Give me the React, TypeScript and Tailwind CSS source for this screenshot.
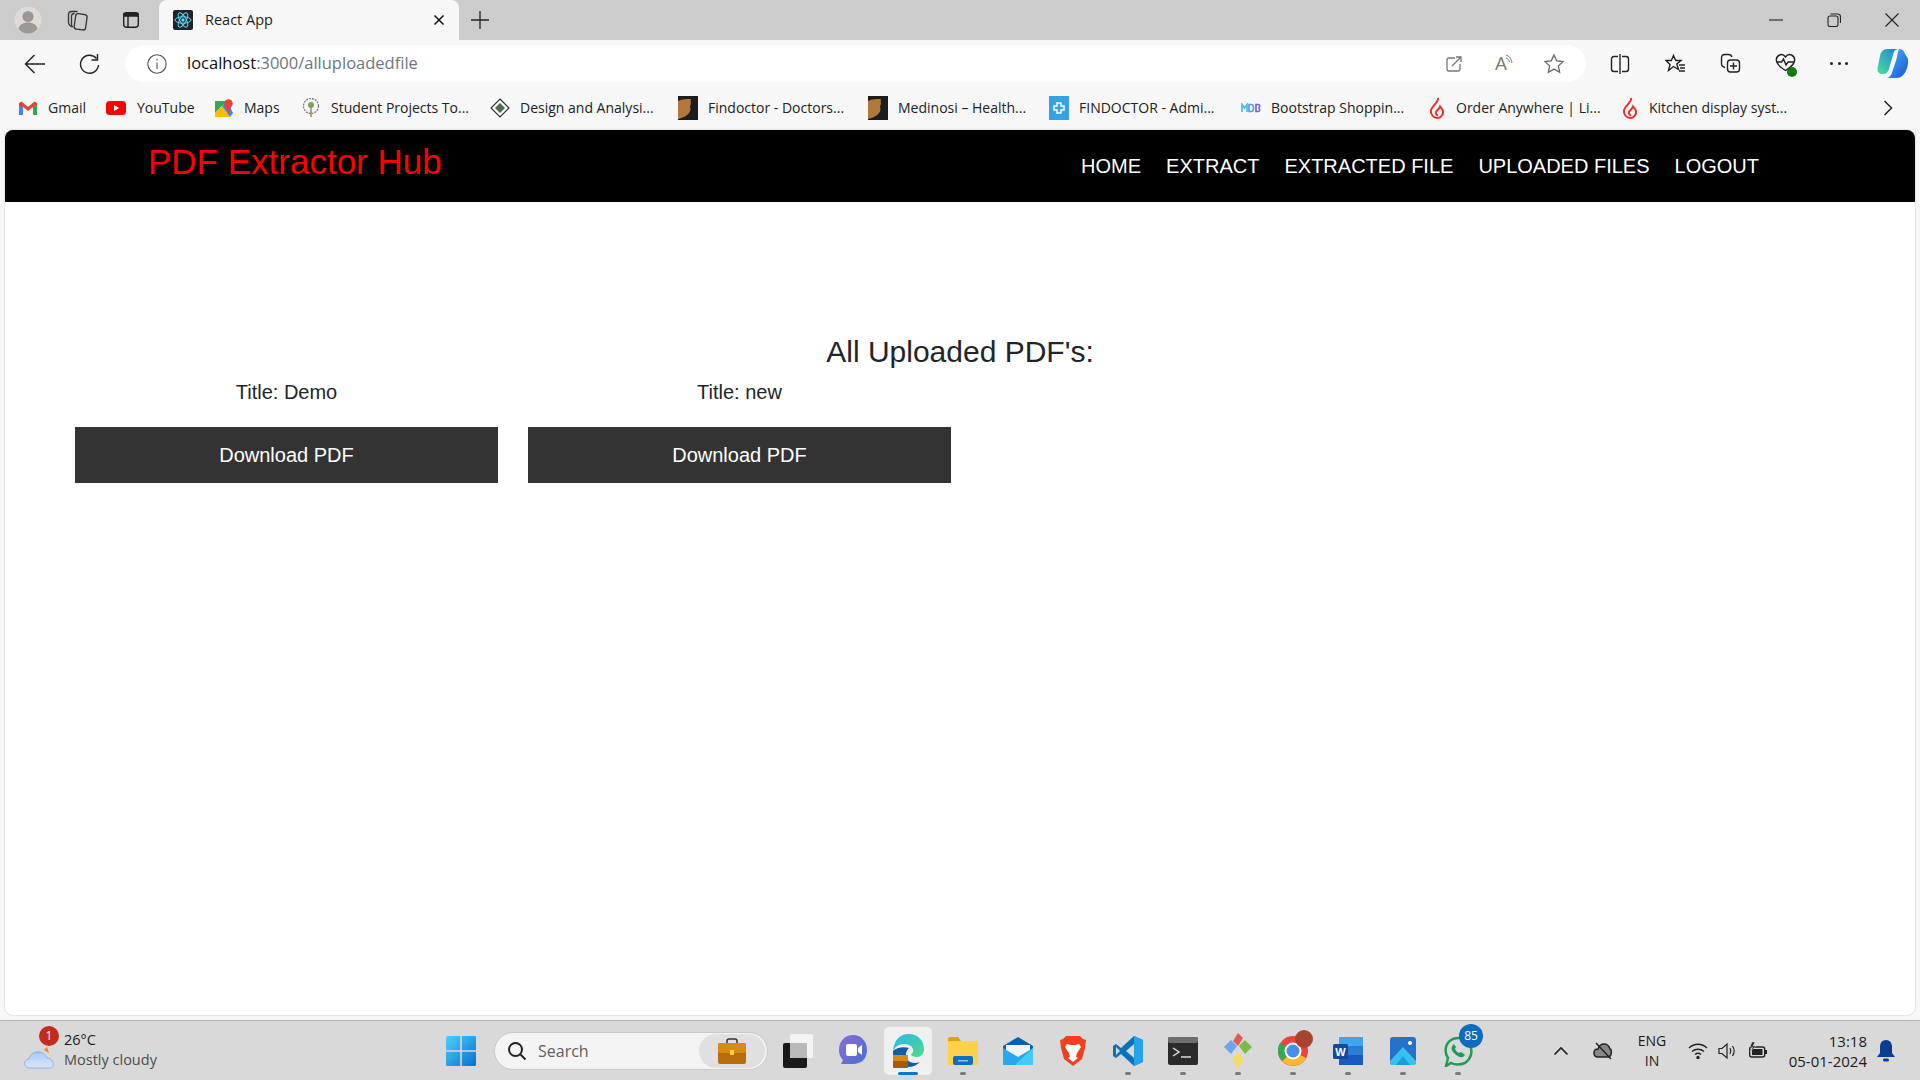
import { ReactNode } from 'react';

const uiFont = "font-['Open_Sans','Noto_Sans',sans-serif]";

function TitleBar() {
  return (
    <div className="flex h-10 items-end bg-[#cccccc]">
      <div className="flex h-10 items-center pl-[14px]">
        <svg width="28" height="28" viewBox="0 0 28 28">
          <circle cx="14" cy="14" r="13.5" fill="#dedbd6" />
          <circle cx="14" cy="10.5" r="5.5" fill="#9c9893" />
          <path d="M4.5 23c1-5 5-6.5 9.5-6.5s8.500 1.500 9.500 6.500c-2.500 3-6 4.500-9.500 4.500s-7-1.500-9.500-4.500z" fill="#9c9893" />
        </svg>
        <svg className="ml-[23px]" width="24" height="24" viewBox="0 0 24 24" fill="none" stroke="#333" strokeWidth="1.3">
          <rect x="10" y="6" width="11.500" height="15.500" rx="2.500" transform="rotate(8 15 13)" fill="#ccc" />
          <path d="M7 19l-2-1.500c-1-1-1.500-1.800-1.500-3V7c0-2 1-3.500 3-3.500h6" />
          <path d="M9.500 5.500c-1.800 0-3 1-3 3v8c0 1 .5 2 1.500 2.500" />
        </svg>
        <svg className="ml-[33px]" width="18" height="18" viewBox="0 0 18 18" fill="none" stroke="#222" strokeWidth="1.4">
          <rect x="1.700" y="1.700" width="14.600" height="14.600" rx="3" />
          <path d="M2 2.500h14V5H2z" fill="#222" />
          <path d="M6 5v11" />
        </svg>
      </div>
      <div className="ml-[19px] flex h-10 w-[300px] items-center rounded-t-lg bg-[#f7f7f7] pb-[1px] pl-[14px] pr-[14px]">
        <svg width="20" height="20" viewBox="0 0 20 20">
          <rect width="20" height="20" rx="2" fill="#20232a" />
          <g fill="none" stroke="#61dafb" strokeWidth="1">
            <ellipse cx="10" cy="10" rx="8" ry="3.200" />
            <ellipse cx="10" cy="10" rx="8" ry="3.200" transform="rotate(60 10 10)" />
            <ellipse cx="10" cy="10" rx="8" ry="3.200" transform="rotate(120 10 10)" />
          </g>
          <circle cx="10" cy="10" r="1.700" fill="#61dafb" />
        </svg>
        <span className={`ml-3 flex-1 text-[14.500px] text-[#222] ${uiFont}`}>React App</span>
        <svg width="12" height="12" viewBox="0 0 12 12" stroke="#111" strokeWidth="1.500">
          <path d="M1.500 1.500l9 9M10.500 1.500l-9 9" />
        </svg>
      </div>
      <div className="flex h-10 flex-1 items-center pl-[12px]">
        <svg width="18" height="18" viewBox="0 0 18 18" stroke="#222" strokeWidth="1.300">
          <path d="M9 0v18M0 9h18" />
        </svg>
      </div>
      <div className="flex h-10 items-center gap-[44px] pr-[21px]">
        <svg width="14" height="14" viewBox="0 0 14 14" stroke="#222" strokeWidth="1.100">
          <path d="M0 7h14" />
        </svg>
        <svg width="14" height="14" viewBox="0 0 14 14" fill="none" stroke="#222" strokeWidth="1.100">
          <rect x="1" y="3" width="10" height="10.500" rx="2" />
          <path d="M3.500 1h7c2 0 3 1 3 3v6" />
        </svg>
        <svg width="14" height="14" viewBox="0 0 14 14" stroke="#222" strokeWidth="1.100">
          <path d="M.5.500l13 13M13.500.500l-13 13" />
        </svg>
      </div>
    </div>
  );
}

function ToolBar() {
  return (
    <div className="flex h-[47px] items-center bg-[#f7f7f7]">
      <div className="flex w-[125px] items-center pl-[24px]">
        <svg width="22" height="22" viewBox="0 0 22 22" fill="none" stroke="#222" strokeWidth="1.500">
          <path d="M21 11H2M10.500 2L1.500 11l9 9" />
        </svg>
        <svg className="ml-[33px]" width="21" height="22" viewBox="0 0 21 22" fill="none" stroke="#222" strokeWidth="1.400">
          <path d="M17.500 5.500A9 9 0 1 0 19.500 12" />
          <path d="M18.500 1v6h-6" />
        </svg>
      </div>
      <div className={`flex h-[37px] w-[1461px] items-center rounded-full bg-white pl-[22px] pr-[22px] ${uiFont}`}>
        <svg width="20" height="20" viewBox="0 0 20 20" fill="none" stroke="#555" strokeWidth="1.100">
          <circle cx="10" cy="10" r="9.200" />
          <path d="M10 8.500v6.500M10 5v1.500" />
        </svg>
        <span className="ml-[20px] flex-1 text-[16.500px] text-[#111]">
          localhost<span className="text-[#6d7682]">:3000/alluploadedfile</span>
        </span>
        <svg width="16" height="16" viewBox="0 0 16 16" fill="none" stroke="#777" strokeWidth="1.300">
          <path d="M9 2H3C1.800 2 1 2.800 1 4v9c0 1.200.8 2 2 2h9c1.200 0 2-.8 2-2V8" />
          <path d="M6 10L15 1M10 1h5v5" />
        </svg>
        <span className="ml-[33px] flex w-[20px] items-start text-[19px] leading-none text-[#777]">
          A
          <svg className="-ml-[2px]" width="9" height="12" viewBox="0 0 9 12" fill="none" stroke="#777" strokeWidth="1">
            <path d="M1 1c3 1 5 3 6 8M1 4c2 .8 3 2 3.500 4" />
          </svg>
        </span>
        <svg className="ml-[29px]" width="20" height="20" viewBox="0 0 20 20" fill="none" stroke="#666" strokeWidth="1.300">
          <path d="M10 1l2.700 5.800 6.300.8-4.600 4.300 1.200 6.300-5.600-3.100-5.600 3.100 1.200-6.300L1 7.600l6.300-.8z" />
        </svg>
      </div>
      <div className="flex flex-1 items-center pl-[24px]">
        <svg width="20" height="20" viewBox="0 0 20 20" fill="none" stroke="#222" strokeWidth="1.400">
          <path d="M8 2.500H4C2.500 2.500 1.500 3.500 1.500 5v10c0 1.500 1 2.500 2.500 2.500h4M12 2.500h4c1.500 0 2.500 1 2.500 2.500v10c0 1.500-1 2.500-2.500 2.500h-4M10 0v20" />
        </svg>
        <svg className="ml-[35px]" width="21" height="20" viewBox="0 0 21 20" fill="none" stroke="#222" strokeWidth="1.400">
          <path d="M8.500 1.500l2.200 5H16l-4.200 3.500 1.700 5.500-5-3-5 4 1.500-6L1 6.500h5.300z" />
          <path d="M14 11h6M15 14h5M14 17h6" />
        </svg>
        <svg className="ml-[34px]" width="21" height="21" viewBox="0 0 21 21" fill="none" stroke="#222" strokeWidth="1.400">
          <path d="M5 14.500c-2-.5-3.500-2-3.500-4V5c0-2 1.500-3.500 3.500-3.500h3.500c2 0 3 1 3.500 2.500" />
          <rect x="7.500" y="7" width="12" height="12" rx="3" fill="#f7f7f7" />
          <path d="M13.500 9.500v7M10 13h7" />
        </svg>
        <span className="relative ml-[34px] flex h-[21px] w-[21px]">
          <svg width="21" height="20" viewBox="0 0 21 20" fill="none" stroke="#222" strokeWidth="1.400">
            <path d="M10.500 4C9 1.800 6.500 1 4.500 2S1 5.500 1.500 8c.5 2.500 4 6.500 9 9.500 5-3 8.500-7 9-9.500.5-2.500-1-5-3-6s-4.500-.2-6 2z" />
            <path d="M1.500 9h5l2-3 2.500 6 2-3h6" />
          </svg>
          <span className="absolute -bottom-[3px] -right-[1px] h-[10px] w-[10px] rounded-full bg-[#107c10]" />
        </span>
        <span className="ml-[34px] flex w-[18px] justify-between">
          <i className="h-[3px] w-[3px] rounded-full bg-[#222]" />
          <i className="h-[3px] w-[3px] rounded-full bg-[#222]" />
          <i className="h-[3px] w-[3px] rounded-full bg-[#222]" />
        </span>
        <svg className="ml-[29px]" width="32" height="33" viewBox="0 0 32 33">
          <defs>
            <linearGradient id="cpA" x1="0" y1="1" x2="1" y2="0">
              <stop offset="0" stopColor="#4adf9a" />
              <stop offset="1" stopColor="#1a7fdc" />
            </linearGradient>
            <linearGradient id="cpB" x1="0" y1="0" x2="1" y2="1">
              <stop offset="0" stopColor="#4fb8f0" />
              <stop offset="1" stopColor="#1553d8" />
            </linearGradient>
          </defs>
          <path d="M10 2h12c-3 0-4.500 1-5.500 4L12 22c-1 3-3 5-6 5-4 0-6-2-5.500-6L3 9c.5-4 3.500-7 7-7z" fill="url(#cpA)" />
          <path d="M22 2c3 0 4.500 1 5.500 4l3.500 6c.8 5-1.500 14-6 17-1.500 1-3 2-5 2H9c3 0 4.500-2 5.500-4l5-15c.8-3 1-6 2.500-10z" fill="url(#cpB)" />
        </svg>
      </div>
    </div>
  );
}

function MFavicon({ kind }: { kind: string }) {
  if (kind === 'gmail')
    return (
      <svg width="18" height="14" viewBox="0 0 18 14">
        <path d="M0 2l2.500-1.500L9 6l6.500-5.500L18 2v12h-4V6L9 10 4 6v8H0z" fill="#ea4335" />
        <path d="M0 4v8.500C0 13.300.7 14 1.500 14H4V6.500z" fill="#4285f4" />
        <path d="M18 4v8.500c0 .8-.7 1.500-1.500 1.500H14V6.500z" fill="#34a853" />
      </svg>
    );
  if (kind === 'yt')
    return (
      <svg width="20" height="14" viewBox="0 0 20 14">
        <rect width="20" height="14" rx="3.500" fill="#f00" />
        <path d="M8 4l5.200 3L8 10z" fill="#fff" />
      </svg>
    );
  if (kind === 'maps')
    return (
      <svg width="18" height="18" viewBox="0 0 18 18">
        <path d="M0 2h12l-12 12z" fill="#34a853" />
        <path d="M0 18V14l7-7 8 11z" fill="#fbbc04" />
        <path d="M7 7l5-5 6 12-3 4z" fill="#4285f4" />
        <circle cx="13.500" cy="4.500" r="4.200" fill="#ea4335" />
        <path d="M10.500 7l3 8 3-8z" fill="#ea4335" />
      </svg>
    );
  if (kind === 'tree')
    return (
      <svg width="20" height="20" viewBox="0 0 20 20" fill="none">
        <circle cx="10" cy="8" r="7.500" stroke="#777" strokeWidth="1.200" strokeDasharray="2 1" />
        <path d="M10 7v12" stroke="#8a6a3a" strokeWidth="1.200" />
        <circle cx="10" cy="7" r="3" fill="#7fa35c" />
      </svg>
    );
  if (kind === 'diamond')
    return (
      <svg width="20" height="20" viewBox="0 0 20 20" fill="none">
        <path d="M10 1l9 9-9 9-9-9z" stroke="#333" strokeWidth="1.200" />
        <path d="M10 5l5 5-5 5-5-5z" fill="#4e6b52" />
      </svg>
    );
  if (kind === 'wing')
    return (
      <svg width="20" height="24" viewBox="0 0 20 24">
        <rect width="20" height="24" fill="#1c1c1c" />
        <path d="M0 5c4-2 9-2 13-2-1 3 1 5-1 7 1 4 0 6-1 7-1 2-6 5-11 6z" fill="#b0783a" />
      </svg>
    );
  if (kind === 'blue')
    return (
      <svg width="20" height="24" viewBox="0 0 20 24">
        <rect width="20" height="24" fill="#36a3e0" />
        <path d="M8 7h4v3h3v4h-3v3H8v-3H5v-4h3z" fill="none" stroke="#fff" strokeWidth="1.500" />
      </svg>
    );
  if (kind === 'mdb')
    return (
      <svg width="20" height="10" viewBox="0 0 20 10">
        <path d="M1 9V1.500L3.500 5 6 1.500V9" fill="none" stroke="#52b6ea" strokeWidth="1.700" />
        <path d="M8 1.500h2.500c1.500 0 2 1.500 2 3.500s-.5 3.500-2 3.500H8z" fill="none" stroke="#52a0ea" strokeWidth="1.700" />
        <path d="M15 1.500h2.500c1.500 0 1.500 3.200 0 3.500 1.500.3 1.500 3.500 0 3.500H15z" fill="none" stroke="#7a62d8" strokeWidth="1.700" />
      </svg>
    );
  return (
    <svg width="16" height="22" viewBox="0 0 16 22" fill="none" stroke="#ee2c2c" strokeWidth="2">
      <path d="M9 1C10 5 3 9 2 13c-.8 4 2.500 8 6 8s6.800-3.500 6-7c-.4-2-2-3-3-4.500C10 12 8 13 7 15c-.8 2 1 3.500 2 3" />
    </svg>
  );
}

const bookmarks = [
  { label: 'Gmail', kind: 'gmail', cls: 'w-[87px]', box: 'w-[29px]' },
  { label: 'YouTube', kind: 'yt', cls: 'w-[109px]', box: 'w-[31px]' },
  { label: 'Maps', kind: 'maps', cls: 'w-[86px]', box: 'w-[29px]' },
  { label: 'Student Projects To...', kind: 'tree', cls: 'w-[189px]', box: 'w-[30px]' },
  { label: 'Design and Analysi...', kind: 'diamond', cls: 'w-[188px]', box: 'w-[30px]' },
  { label: 'Findoctor - Doctors...', kind: 'wing', cls: 'w-[190px]', box: 'w-[30px]' },
  { label: 'Medinosi – Health...', kind: 'wing', cls: 'w-[181px]', box: 'w-[30px]' },
  { label: 'FINDOCTOR - Admi...', kind: 'blue', cls: 'w-[192px]', box: 'w-[30px]' },
  { label: 'Bootstrap Shoppin...', kind: 'mdb', cls: 'w-[188px]', box: 'w-[30px]' },
  { label: 'Order Anywhere | Li...', kind: 'flame', cls: 'w-[193px]', box: 'w-[27px]' },
  { label: 'Kitchen display syst...', kind: 'flame', cls: 'w-[261px]', box: 'w-[27px]' },
];

function BookmarkBar() {
  return (
    <div className={`flex h-[43px] items-center bg-[#f7f7f7] pb-[2px] pl-[19px] text-[14px] text-[#222] ${uiFont}`}>
      {bookmarks.map((b) => (
        <div key={b.label} className={`flex shrink-0 items-center ${b.cls}`}>
          <span className={`flex shrink-0 items-center ${b.box}`}>
            <MFavicon kind={b.kind} />
          </span>
          <span className="whitespace-nowrap">{b.label}</span>
        </div>
      ))}
      <svg width="10" height="16" viewBox="0 0 10 16" fill="none" stroke="#222" strokeWidth="1.500">
        <path d="M1.500 1l7 7-7 7" />
      </svg>
    </div>
  );
}

function NavBar() {
  const links = ['HOME', 'EXTRACT', 'EXTRACTED FILE', 'UPLOADED FILES', 'LOGOUT'];
  return (
    <header className="flex h-[72px] items-center rounded-t-lg bg-black pl-[144px] pr-[156px]">
      <span className="-ml-[1px] flex-1 pb-[8px] text-[35px] text-[#ff0000]">PDF Extractor Hub</span>
      <nav className="flex gap-[25px] text-[20px] text-white">
        {links.map((l) => (
          <a key={l}>{l}</a>
        ))}
      </nav>
    </header>
  );
}

function PdfCard({ title }: { title: string }) {
  return (
    <div className="flex w-[423px] flex-col items-center">
      <p className="text-[20px] leading-[23px] text-[#212529]">Title: {title}</p>
      <button className="mt-[23px] h-[56px] w-full bg-[#333333] text-[20px] text-white">Download PDF</button>
    </div>
  );
}

function Page() {
  return (
    <div className="flex flex-1 px-[5px] font-['Liberation_Sans',Arial,sans-serif]">
      <div className="flex flex-1 flex-col rounded-b-lg bg-white shadow-[0_0_2px_rgba(0,0,0,0.25)]">
        <NavBar />
        <main className="flex flex-col pt-[132px]">
          <h2 className="w-[1910px] text-center text-[30px] leading-[36px] text-[#212529]">All Uploaded PDF's:</h2>
          <div className="mt-[11px] flex gap-[30px] pl-[70px]">
            <PdfCard title="Demo" />
            <PdfCard title="new" />
          </div>
        </main>
      </div>
    </div>
  );
}

function TaskSlot({ children, dot, active }: { children: ReactNode; dot?: boolean; active?: boolean }) {
  return (
    <div className={`relative flex h-[48px] w-[48px] items-center justify-center rounded-[5px] ${active ? 'bg-[#f0f0f0]' : ''}`}>
      {children}
      {dot && <span className="absolute bottom-0 h-[3px] w-[6px] rounded-full bg-[#7a7a7a]" />}
      {active && <span className="absolute bottom-0 h-[3px] w-[20px] rounded-full bg-[#0078d4]" />}
    </div>
  );
}

function Taskbar() {
  return (
    <footer className={`mt-[5px] flex h-[60px] items-center border-t border-[#b5b5b5] bg-[#d9d9d9] text-[#1b1b1b] ${uiFont}`}>
      {/* weather */}
      <div className="relative ml-[24px] flex w-[422px] items-center">
        <svg className="mt-[14px]" width="32" height="22" viewBox="0 0 32 22">
          <defs>
            <linearGradient id="cloud" x1="0" y1="0" x2="0" y2="1">
              <stop offset="0" stopColor="#a9c9f2" />
              <stop offset="1" stopColor="#dbe8f8" />
            </linearGradient>
          </defs>
          <path d="M20 3l3-3 2 6z" fill="#e88a1a" />
          <path d="M6 21c-7 0-7-9-1-9 1-5 6-8 11-7 4 1 6 3 7 6 7 0 9 10 2 10z" fill="url(#cloud)" stroke="#6fa2e0" strokeWidth=".7" />
        </svg>
        <span className="absolute -top-[4px] left-[15px] flex h-[20px] w-[20px] items-center justify-center rounded-full bg-[#c42b1c] text-[12px] text-white">1</span>
        <div className="mb-[2px] ml-[8px] flex flex-col text-[14.500px] leading-[20px]">
          <span>26°C</span>
          <span className="text-[#4d4d4d]">Mostly cloudy</span>
        </div>
      </div>
      {/* start */}
      <svg width="30" height="30" viewBox="0 0 30 30">
        <defs>
          <linearGradient id="win" x1="0" y1="0" x2="1" y2="1">
            <stop offset="0" stopColor="#4fd0fb" />
            <stop offset="1" stopColor="#0570cf" />
          </linearGradient>
        </defs>
        <path d="M0 1.500C0 .7.700 0 1.500 0h12.700v14.200H0zM15.800 0h12.700c.8 0 1.500.7 1.500 1.500v12.700H15.800zM0 15.800h14.200V30H1.500C.7 30 0 29.300 0 28.500zM15.800 15.800H30v12.700c0 .8-.7 1.500-1.500 1.500H15.800z" fill="url(#win)" />
      </svg>
      {/* search */}
      <div className="ml-[18px] flex h-[38px] w-[274px] items-center rounded-full border border-[#c9c9c9] bg-[#f4f4f4] pl-[12px] pr-[2px]">
        <svg width="20" height="20" viewBox="0 0 20 20" fill="none" stroke="#222" strokeWidth="2">
          <circle cx="8.500" cy="8.500" r="6.500" />
          <path d="M13.500 13.500L18.500 18.500" />
        </svg>
        <span className="ml-[11px] flex-1 text-[16px] text-[#5f5f5f]">Search</span>
        <span className="flex h-[34px] w-[66px] items-center justify-center rounded-full bg-[#e0e0e0]">
          <svg width="28" height="26" viewBox="0 0 28 26">
            <path d="M9 6V3c0-1 .8-2 2-2h6c1 0 2 1 2 2v3" fill="none" stroke="#333" strokeWidth="1.500" />
            <rect y="5" width="28" height="21" rx="2" fill="#b86d0c" />
            <rect y="5" width="28" height="10" rx="2" fill="#d98a14" />
            <rect x="12" y="12" width="4" height="5" fill="#f5d33f" />
          </svg>
        </span>
      </div>
      {/* pinned apps */}
      <div className="ml-[6px] flex gap-[7px]">
        <TaskSlot>
          <svg width="30" height="34" viewBox="0 0 30 34">
            <rect y="9" width="24" height="25" rx="2" fill="#1a1a1a" />
            <rect x="7" y="0" width="23" height="24" rx="2" fill="#f4f4f4" />
            <rect x="7" y="9" width="17" height="15" fill="#b9b9b9" />
          </svg>
        </TaskSlot>
        <TaskSlot>
          <svg width="30" height="34" viewBox="0 0 30 34">
            <defs>
              <linearGradient id="meet" x1="0" y1="0" x2="1" y2="1">
                <stop offset="0" stopColor="#8a6bd8" />
                <stop offset="1" stopColor="#4a6fd0" />
              </linearGradient>
            </defs>
            <path d="M15 1c8 0 14 6 14 15s-6 14-14 14H3l2-4C2 23 1 20 1 16 1 7 7 1 15 1z" fill="url(#meet)" />
            <rect x="8" y="10" width="11" height="12" rx="2" fill="#fff" />
            <path d="M20 14l4-3v10l-4-3z" fill="#fff" />
          </svg>
        </TaskSlot>
        <TaskSlot active>
          <svg width="32" height="36" viewBox="0 0 32 36">
            <defs>
              <linearGradient id="edge" x1="0" y1="0" x2="1" y2="1">
                <stop offset="0" stopColor="#2ab7e8" />
                <stop offset="1" stopColor="#4ddb8a" />
              </linearGradient>
            </defs>
            <path d="M1 18C2 7 8 1 17 1c8 0 15 6 15 15 0 5-3 8-7 8-3 0-6-1-6-3 3-1 3-5 0-8C13 9 4 11 1 18z" fill="url(#edge)" />
            <path d="M1 18c-1 9 6 16 15 16 5 0 9-2 12-5-5 2-11 1-13-3-2-3-1-9 2-11-6-2-13 0-16 3z" fill="#0c5ea8" />
            <rect x="1" y="22" width="15" height="13" rx="1" fill="#a8590a" />
            <rect x="1" y="22" width="15" height="6" fill="#d98a14" />
          </svg>
        </TaskSlot>
        <TaskSlot dot>
          <svg width="30" height="28" viewBox="0 0 30 28">
            <path d="M0 2c0-1 .7-2 2-2h8l3 4h15c1 0 2 1 2 2v3H0z" fill="#e0a214" />
            <rect y="4" width="30" height="24" rx="1" fill="#fdd14b" />
            <rect x="5" y="19" width="20" height="9" rx="2" fill="#0d6fc4" />
            <rect x="10" y="23" width="10" height="1.500" fill="#8fc7f2" />
          </svg>
        </TaskSlot>
        <TaskSlot>
          <svg width="30" height="28" viewBox="0 0 30 28">
            <path d="M15 0L30 9v19H0V9z" fill="#0a5fa8" />
            <path d="M3 8h24v7l-12 7-12-7z" fill="#f0f4f8" />
            <path d="M0 11l15 9 15-9v17H0z" fill="#28a8ea" />
            <path d="M30 11v17H12z" fill="#50d9ff" opacity=".7" />
          </svg>
        </TaskSlot>
        <TaskSlot>
          <svg width="26" height="30" viewBox="0 0 26 30">
            <path d="M6 0h14l3 3 3 1-1 8-3 11-9 7-9-7L1 12 0 4l3-1z" fill="#f1411c" />
            <path d="M7 8l4 1h4l4-1 2 3-4 6-1 4 2 1-5 4-5-4 2-1-1-4-4-6z" fill="#fff" />
          </svg>
        </TaskSlot>
        <TaskSlot dot>
          <svg width="30" height="30" viewBox="0 0 30 30">
            <path d="M21 0l9 4v22l-9 4-13-12-5 4-3-2V10l3-2 5 4z" fill="#0a72bd" />
            <path d="M21 0l9 4v22l-9 4z" fill="#23a3ea" />
            <path d="M21 8v14l-8-7z" fill="#d9d9d9" />
            <path d="M3 11l4 4-4 4z" fill="#d9d9d9" />
          </svg>
        </TaskSlot>
        <TaskSlot dot>
          <svg width="30" height="28" viewBox="0 0 30 28">
            <rect width="30" height="28" rx="2" fill="#2b2b2b" />
            <rect x="0" width="30" height="6" rx="2" fill="#6e6e6e" />
            <path d="M5 11l6 4-6 4" fill="none" stroke="#ddd" strokeWidth="1.500" />
            <path d="M13 20h10" stroke="#ddd" strokeWidth="1.500" />
          </svg>
        </TaskSlot>
        <TaskSlot dot>
          <svg width="28" height="36" viewBox="0 0 28 36">
            <path d="M14 0l5 5-5 8-5-5z" fill="#e25a52" />
            <path d="M0 14l7-7 6 6-6 8z" fill="#6aa4f2" />
            <path d="M28 14l-7-7-6 6 6 8z" fill="#7cb84a" />
            <path d="M14 36l-6-10 6-7 6 7z" fill="#f2dd6c" />
          </svg>
        </TaskSlot>
        <TaskSlot dot>
          <span className="relative flex">
            <svg width="30" height="30" viewBox="0 0 30 30">
              <circle cx="15" cy="15" r="15" fill="#e8453c" />
              <path d="M15 15L28 22A15 15 0 0 1 4 25z" fill="#f9bb2d" />
              <path d="M15 15L4 25A15 15 0 0 1 2 7z" fill="#34a853" />
              <circle cx="15" cy="15" r="7.500" fill="#4a8ce8" stroke="#fff" strokeWidth="2" />
            </svg>
            <span className="absolute -right-[5px] -top-[6px] h-[18px] w-[18px] rounded-full bg-[#a8432f]" />
          </span>
        </TaskSlot>
        <TaskSlot dot>
          <svg width="30" height="28" viewBox="0 0 30 28">
            <rect x="6" width="24" height="28" rx="1.500" fill="#2b7cd3" />
            <rect x="6" width="24" height="9" fill="#41a5ee" />
            <rect x="6" y="18" width="24" height="10" fill="#185abd" />
            <rect y="7" width="15" height="15" rx="1.500" fill="#134a9c" />
            <text x="7.500" y="18.500" fontSize="11" fontWeight="700" textAnchor="middle" fill="#fff" fontFamily="Liberation Sans">W</text>
          </svg>
        </TaskSlot>
        <TaskSlot dot>
          <svg width="26" height="28" viewBox="0 0 26 28">
            <rect width="26" height="28" rx="3" fill="#2672c8" />
            <path d="M0 24l13-14 13 14v1c0 2-1 3-3 3H3c-2 0-3-1-3-3z" fill="#35c2ee" />
            <path d="M6 28l7-9 7 9z" fill="#1e9bd8" />
            <circle cx="20" cy="6" r="2" fill="#fff" />
          </svg>
        </TaskSlot>
        <TaskSlot dot>
          <span className="relative flex">
            <svg width="30" height="32" viewBox="0 0 30 32" fill="none">
              <path d="M3 31l2-8C1 17 2 9 8 5c6-4 15-2 19 5 3 7 1 14-5 18-5 2-10 2-14 0z" stroke="#1e9d5a" strokeWidth="2.500" />
              <path d="M10 10c-2 2-2 5 1 8s6 5 9 4c2-1 2-3 1-3l-3-2-2 1c-2-1-3-2-4-4l1-2-2-3z" fill="#1e9d5a" />
            </svg>
            <span className="absolute -right-[10px] -top-[11px] flex h-[24px] w-[24px] items-center justify-center rounded-full bg-[#0f6cbd] text-[12px] text-white">85</span>
          </span>
        </TaskSlot>
      </div>
      {/* tray */}
      <div className="ml-auto flex items-center pr-[25px]">
        <svg width="16" height="10" viewBox="0 0 16 10" fill="none" stroke="#222" strokeWidth="1.700">
          <path d="M1.500 8.500L8 2l6.500 6.500" />
        </svg>
        <svg className="ml-[24px]" width="20" height="18" viewBox="0 0 20 18" fill="none" stroke="#222" strokeWidth="1.500">
          <path d="M5 15c-3 0-4-2-4-4 0-3 2-4 4-4 1-3 3-5 6-5 3 0 5 2 6 5 2 .5 2 8-2 8z" fill="#888" />
          <path d="M3 1l15 16" />
        </svg>
        <div className="ml-[23px] flex w-[32px] flex-col items-center text-[14px] leading-[20px]">
          <span>ENG</span>
          <span>IN</span>
        </div>
        <svg className="ml-[20px]" width="20" height="16" viewBox="0 0 20 16" fill="none" stroke="#222" strokeWidth="1.400">
          <path d="M1 5c5-5 13-5 18 0M4 8.500c3.500-3 8.500-3 12 0M7 11.500c1.800-1.500 4.200-1.500 6 0" />
          <circle cx="10" cy="14.500" r="1" fill="#222" />
        </svg>
        <svg className="ml-[10px]" width="20" height="18" viewBox="0 0 20 18" fill="none" stroke="#222" strokeWidth="1.200">
          <path d="M1 6.500h3l5-4.500v14l-5-4.500H1z" />
          <path d="M12 6c1 2 1 4 0 6M14.500 4c2 3 2 7 0 10" />
        </svg>
        <svg className="ml-[9px]" width="20" height="18" viewBox="0 0 20 18">
          <rect x="2.700" y="5" width="15" height="10" rx="2" fill="#d9d9d9" stroke="#222" strokeWidth="1.400" />
          <rect x="5" y="7" width="10.500" height="6" fill="#222" />
          <rect x="18" y="8" width="2" height="4" fill="#222" />
          <path d="M5 0L3 5h3L3 10l6-6H6l2-4z" fill="#222" stroke="#d9d9d9" strokeWidth=".5" />
        </svg>
        <div className="ml-[12px] flex w-[88px] flex-col items-end text-[15px] leading-[20px]">
          <span>13:18</span>
          <span>05-01-2024</span>
        </div>
        <svg className="ml-[10px]" width="18" height="22" viewBox="0 0 18 22" fill="#0a3d8f">
          <path d="M9 0c4 0 6 3 6 7v6l3 4H0l3-4V7c0-4 2-7 6-7z" />
          <rect x="6" y="18.500" width="6" height="3" rx="1.500" />
        </svg>
      </div>
    </footer>
  );
}

export default function App() {
  return (
    <div className="flex h-[1080px] w-[1920px] flex-col overflow-hidden bg-[#f7f7f7]">
      <TitleBar />
      <ToolBar />
      <BookmarkBar />
      <Page />
      <Taskbar />
    </div>
  );
}
